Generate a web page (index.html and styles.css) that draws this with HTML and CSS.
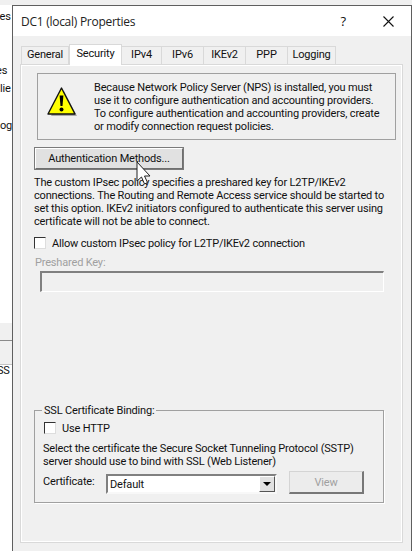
FILE: index.html
```html
<!DOCTYPE html>
<html lang="en">
<head>
  <meta charset="UTF-8">
  <title>DC1 (local) Properties</title>
  <link rel="stylesheet" href="styles.css">
</head>
<body>
  <!-- bits of the window behind the dialog -->
  <div class="behind">
    <span class="behind-text t1">ces</span>
    <span class="behind-text t2">es</span>
    <span class="behind-text t3">lie</span>
    <span class="behind-text t4">og</span>
    <div class="behind-band band-a"></div>
    <div class="behind-band band-b"></div>
    <span class="behind-text t5">SS</span>
  </div>

  <div class="window">
    <div class="titlebar">
      <span class="title">DC1 (local) Properties</span>
      <span class="help">?</span>
      <svg class="close" width="11" height="11" viewBox="0 0 11 11">
        <path d="M0.5 0.5L10.5 10.5M10.5 0.5L0.5 10.5" stroke="#111" stroke-width="1.1" fill="none"/>
      </svg>
    </div>

    <div class="content">
      <div class="tabs">
        <div class="tab tab-general">General</div>
        <div class="tab tab-active">Security</div>
        <div class="tab tab-ipv4">IPv4</div>
        <div class="tab tab-ipv6">IPv6</div>
        <div class="tab tab-ikev2">IKEv2</div>
        <div class="tab tab-ppp">PPP</div>
        <div class="tab tab-logging">Logging</div>
      </div>

      <div class="panel">
        <div class="notice">
          <svg class="warn" width="31" height="32" viewBox="0 0 31 32">
            <path d="M17 5L30 30H4Z" fill="#8a8a8a" opacity="0.7"/>
            <path d="M14.5 2L28 28H1Z" fill="#ffff00" stroke="#111" stroke-width="1.4" stroke-linejoin="round"/>
            <path d="M12.6 9.5h3.8l-0.9 10.5h-2Z" fill="#000"/>
            <circle cx="14.5" cy="23.5" r="2" fill="#000"/>
          </svg>
          <p class="notice-text">Because Network Policy Server (NPS) is installed, you must<br>use it to configure authentication and accounting providers.<br>To configure authentication and accounting providers, create<br>or modify connection request policies.</p>
        </div>

        <button class="button auth-btn">Authentication Methods...</button>

        <p class="desc">The custom IPsec policy specifies a preshared key for L2TP/IKEv2<br>connections. The Routing and Remote Access service should be started to<br>set this option. IKEv2 initiators configured to authenticate this server using<br>certificate will not be able to connect.</p>

        <label class="check-row">
          <span class="checkbox"></span>
          <span>Allow custom IPsec policy for L2TP/IKEv2 connection</span>
        </label>

        <div class="key-label">Preshared Key:</div>
        <div class="key-input"></div>

        <div class="group">
          <span class="legend">SSL Certificate Binding:</span>
          <label class="check-row http-row">
            <span class="checkbox"></span>
            <span>Use HTTP</span>
          </label>
          <p class="group-text">Select the certificate the Secure Socket Tunneling Protocol (SSTP)<br>server should use to bind with SSL (Web Listener)</p>
          <div class="cert-row">
            <span class="cert-label">Certificate:</span>
            <div class="select">
              <span class="select-value">Default</span>
              <span class="select-arrow"></span>
            </div>
            <button class="button view-btn">View</button>
          </div>
        </div>
      </div>
    </div>
  </div>

  <svg class="cursor" width="17" height="25" viewBox="0 0 17 25">
    <path d="M2 1V20L6.5 16L9.5 23L12.5 21.500L9.500 15H15Z" fill="#fff" stroke="#222" stroke-width="1"/>
  </svg>
</body>
</html>
```

FILE: styles.css
```css
body {
  margin: 0;
  width: 412px;
  height: 551px;
  overflow: hidden;
  position: relative;
  display: flex;
  background-color: #f0f0f0;
  font-family: Roboto, "Liberation Sans", sans-serif;
  font-size: 11px;
  letter-spacing: -0.18px;
  color: #111;
}

/* Window behind */
.behind {
  width: 12px;
  flex-shrink: 0;
  position: relative;
  background-color: #fff;
  overflow: hidden;
  border-top: 5px solid #f0f0f0;
}

.behind-text {
  position: absolute;
  left: -1px;
  line-height: 13px;
  white-space: nowrap;
}

.t1 { top: 5px; left: -6px; }
.t2 { top: 59px; left: -4px; }
.t3 { top: 77px; left: 0; }
.t4 { top: 114px; left: 0; }
.t5 { top: 359px; left: -3px; }

.behind-band {
  position: absolute;
  left: 0;
  right: 0;
  background-color: #f0f0f0;
}

.band-a {
  top: 318px;
  height: 17px;
  border-bottom: 1px solid #8a8a8a;
}

.band-b {
  top: 336px;
  height: 23px;
  border-bottom: 1px solid #c4c4c4;
}

/* Dialog */
.window {
  flex: 1;
  margin-top: 5px;
  border: 1px solid #5f5f5f;
  border-bottom: none;
  display: flex;
  flex-direction: column;
  min-width: 0;
}

.titlebar {
  height: 30px;
  flex-shrink: 0;
  display: flex;
  align-items: center;
  background-color: #fff;
  padding-left: 8px;
}

.title {
  font-family: "Open Sans", sans-serif;
  font-size: 12px;
  letter-spacing: -0.27px;
  flex: 1;
  color: #222;
}

.help {
  font-family: "Open Sans", sans-serif;
  font-size: 13px;
  margin-right: 37px;
}

.close {
  margin-right: 17px;
}

.content {
  flex: 1;
  padding: 7px 8px 8px 7px;
  display: flex;
  flex-direction: column;
  min-height: 0;
}

/* Tabs */
.tabs {
  display: flex;
  align-items: flex-end;
  height: 21px;
  padding-left: 1px;
  flex-shrink: 0;
  position: relative;
  z-index: 1;
}

.tab {
  height: 18px;
  box-sizing: border-box;
  border: 1px solid #d9d9d9;
  border-bottom: none;
  border-left: none;
  background-color: #f0f0f0;
  display: flex;
  align-items: center;
  justify-content: center;
  padding-bottom: 2px;
}

.tab-general { width: 48px; border-left: 1px solid #d9d9d9; }
.tab-ipv4 { width: 40px; }
.tab-ipv6 { width: 42px; }
.tab-ikev2 { width: 42px; }
.tab-ppp { width: 42px; }
.tab-logging { width: 48px; }

.tab-active {
  width: 53px;
  height: 21px;
  margin-bottom: -1px;
  background-color: #fff;
  border-left: 1px solid #d9d9d9;
  padding-bottom: 4px;
}

.panel {
  flex: 1;
  border: 1px solid #d9d9d9;
  box-shadow: inset 0 0 0 1px #fff;
  padding: 8px 6px 0 13px;
  min-height: 0;
}

.notice {
  margin-left: 3px;
  height: 67px;
  box-sizing: border-box;
  border: 1px solid #a0a0a0;
  display: flex;
  align-items: flex-start;
  padding: 6px 0 0 9px;
}

.warn {
  margin-top: 6px;
  flex-shrink: 0;
}

.notice-text {
  margin: 1px 0 0 16px;
  line-height: 13px;
  white-space: nowrap;
}

/* Stylish win95 buttons */
.button {
  font-family: inherit;
  font-size: 11px;
  letter-spacing: -0.18px;
  color: #111;
  background-color: #e1e1e1;
  border: 2px solid;
  border-color: #fff #6e6e6e #6e6e6e #fff;
  outline: 1px solid #7a7a7a;
  outline-offset: -1px;
  padding: 0;
  display: block;
}

.auth-btn {
  width: 150px;
  height: 23px;
  margin-top: 7px;
}

.desc {
  margin: 6px 0 0;
  line-height: 13px;
  white-space: nowrap;
}

.check-row {
  display: flex;
  align-items: center;
  gap: 6px;
  margin-top: 8px;
  height: 14px;
}

.checkbox {
  width: 12px;
  height: 12px;
  box-sizing: border-box;
  border: 1px solid #333;
  border-right-color: #ddd;
  border-bottom-color: #ddd;
  background-color: #fff;
  flex-shrink: 0;
}

.key-label {
  margin: 6px 0 0 1px;
  line-height: 13px;
  color: #a0a0a0;
}

.key-input {
  margin: 2px 0 0 6px;
  width: 344px;
  height: 21px;
  box-sizing: border-box;
  border: 1px solid #fff;
  border-top: 2px solid #808080;
  border-left: 2px solid #808080;
  background-color: #f0f0f0;
}

.group {
  position: relative;
  margin-top: 118px;
  width: 350px;
  height: 93px;
  box-sizing: border-box;
  border: 1px solid #a0a0a0;
  box-shadow: 1px 1px 0 #fff;
  padding: 10px 10px 0 8px;
}

.legend {
  position: absolute;
  top: -7px;
  left: 7px;
  padding: 0 2px;
  line-height: 13px;
  background-color: #f0f0f0;
}

.http-row {
  margin-top: 0;
  margin-left: 1px;
}

.group-text {
  margin: 7px 0 0;
  line-height: 13px;
  white-space: nowrap;
}

.cert-row {
  display: flex;
  align-items: flex-end;
  margin-top: 3px;
}

.cert-label {
  width: 63px;
  flex-shrink: 0;
  line-height: 20px;
  padding-bottom: 2px;
}

.select {
  width: 171px;
  height: 20px;
  box-sizing: border-box;
  border: 2px solid;
  border-color: #808080 #f8f8f8 #f8f8f8 #808080;
  background-color: #fff;
  display: flex;
  align-items: center;
  justify-content: space-between;
}

.select-value {
  padding-left: 2px;
}

.select-arrow {
  width: 16px;
  height: 16px;
  box-sizing: border-box;
  background-color: #e1e1e1;
  border: 1px solid;
  border-color: #fff #555 #555 #fff;
  position: relative;
}

.select-arrow::after {
  content: "";
  position: absolute;
  left: 3px;
  top: 5px;
  border: 4px solid transparent;
  border-bottom: none;
  border-top: 4px solid #000;
}

.view-btn {
  width: 75px;
  height: 23px;
  margin-left: 12px;
  color: #a0a0a0;
  background-color: #ececec;
  border-color: #d4d4d4 #777 #777 #d4d4d4;
  border-width: 1px 2px 2px 1px;
  outline: none;
}

.cursor {
  position: absolute;
  left: 135px;
  top: 161px;
}
```
